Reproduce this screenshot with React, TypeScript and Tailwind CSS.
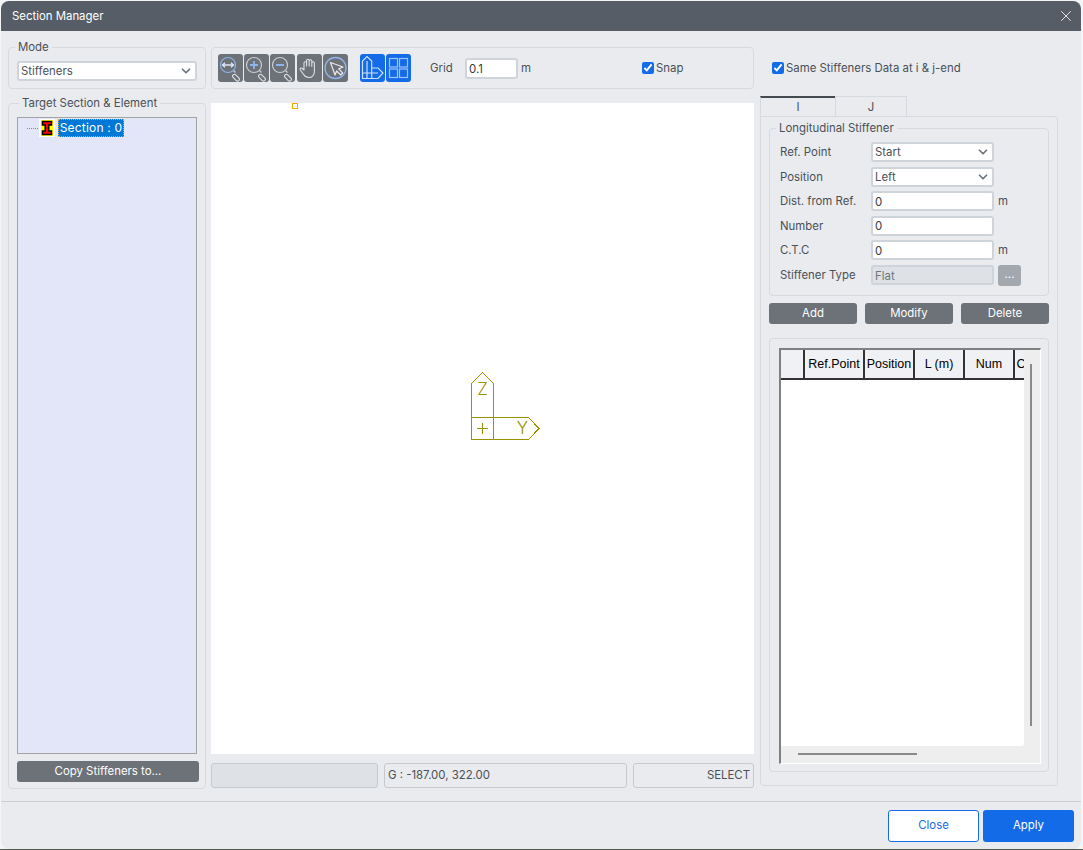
import { ChevronDown, X } from "lucide-react";
import type { ReactNode } from "react";

const FONT = "font-['Inter','Liberation_Sans',sans-serif]";
const TEXT = "text-[#495057]";
const OLIVE = "#9a9200";

const columns = [
  { label: "", width: "w-[24px]" },
  { label: "Ref.Point", width: "w-[60px]" },
  { label: "Position", width: "w-[50px]" },
  { label: "L (m)", width: "w-[50px]" },
  { label: "Num", width: "w-[50px]" },
  { label: "C.T.C", width: "w-[36px]" },
];

const Group = ({
  title,
  className,
  legendClass = "ml-[6px]",
  children,
}: {
  title: string;
  className: string;
  legendClass?: string;
  children: ReactNode;
}) => (
  <fieldset className={`border border-[#d6d9dd] rounded-[4px] ${className}`}>
    <legend className={`${legendClass} px-[3px] text-[11.4px] leading-[14px] ${TEXT}`}>{title}</legend>
    {children}
  </fieldset>
);

const Select = ({ value, className }: { value: string; className: string }) => (
  <div
    className={`h-[20px] flex items-center justify-between bg-white border-2 border-[#ced4da] rounded-[3px] pl-[2px] pr-[2px] text-[11.4px] text-[#495057] ${className}`}
  >
    <span className="pt-[2px]">{value}</span>
    <ChevronDown size={14} strokeWidth={3} color="#6c757d" />
  </div>
);

const Field = ({ value, disabled }: { value: string; disabled?: boolean }) => (
  <input
    readOnly
    value={value}
    className={`w-[123px] h-[20px] border-2 border-[#ced4da] rounded-[3px] pl-[2px] pt-px text-[11.4px] outline-none ${
      disabled ? "bg-[#dee2e6] text-[#6c757d]" : "bg-white text-[#343a40]"
    }`}
  />
);

const ToolButton = ({ children, blue }: { children: ReactNode; blue?: boolean }) => (
  <button
    className={`w-[25px] h-[28px] rounded-[3px] flex items-center justify-center ${
      blue ? "bg-[#146be8]" : "bg-[#6c7278]"
    }`}
  >
    <svg width="25" height="28" viewBox="0 0 25 28" fill="none">
      {children}
    </svg>
  </button>
);

const Lens = ({ blue, children }: { blue?: boolean; children?: ReactNode }) => (
  <>
    <circle cx="10" cy="11" r="7.5" stroke={blue ? "#8fb4ec" : "#c9ccd0"} strokeWidth="1.2" />
    <path d="M15.5 16.5l2 2" stroke="#c9ccd0" strokeWidth="1.2" />
    <rect
      x="16.4"
      y="19.6"
      width="8"
      height="3.6"
      rx="1.8"
      transform="rotate(45 16.4 19.6)"
      stroke="#dfe1e4"
      strokeWidth="1.1"
    />
    {children}
  </>
);

const Toolbar = () => (
  <div className="flex items-center">
    <div className="flex gap-px">
      <ToolButton>
        <Lens blue>
          <path
            d="M4.5 11h11M7 8.8L4.5 11 7 13.2M13 8.8l2.500 2.200-2.500 2.200"
            stroke="#dfe7f5"
            strokeWidth="1.300"
          />
        </Lens>
      </ToolButton>
      <ToolButton>
        <Lens>
          <path d="M6 11h8M10 7v8" stroke="#8fb4ec" strokeWidth="1.800" />
        </Lens>
      </ToolButton>
      <ToolButton>
        <Lens>
          <path d="M6 11h8" stroke="#8fb4ec" strokeWidth="1.800" />
        </Lens>
      </ToolButton>
    </div>
    <div className="flex gap-px ml-[2px]">
      <ToolButton>
        <path
          d="M7 16V9a1.300 1.300 0 0 1 2.600 0v3V6.500a1.300 1.300 0 0 1 2.600 0V12 7a1.300 1.300 0 0 1 2.600 0v5.500V9a1.300 1.300 0 0 1 2.600 0v8.500c0 3.500-2.500 6-5.500 6-2.700 0-4-1-5.300-3L3.300 16c-.9-1.500 1-2.700 2.100-1.500z"
          stroke="#dfe1e4"
          strokeWidth="1.100"
          strokeLinejoin="round"
        />
      </ToolButton>
      <ToolButton>
        <circle cx="12.500" cy="14" r="10.500" stroke="#8fb4ec" strokeWidth="1.300" />
        <path
          d="M7.500 8.500L20 13l-4.300 1.900 4 4.100-2 2-4.100-4L12 21z"
          stroke="#e8eaec"
          strokeWidth="1.200"
          strokeLinejoin="round"
        />
      </ToolButton>
    </div>
    <div className="flex gap-px ml-[12px]">
      <ToolButton blue>
        <path
          d="M2.500 24.500V7L7 2.500 11.700 7v7H18l5 5-5 5.500zM2.500 19h15.500M7 7v17.500M11.700 14v10.500"
          stroke="#cfe0fb"
          strokeWidth="1.200"
        />
      </ToolButton>
      <ToolButton blue>
        <g stroke="#9fc2f7" strokeWidth="1.200">
          <rect x="3.500" y="4.500" width="8" height="8.500" />
          <rect x="13.500" y="4.500" width="8" height="8.500" />
          <rect x="3.500" y="15" width="8" height="8.500" />
          <rect x="13.500" y="15" width="8" height="8.500" />
        </g>
      </ToolButton>
    </div>
  </div>
);

const SectionIcon = () => (
  <svg width="16" height="18" viewBox="0 0 16 18" className="mx-[1px]">
    <rect width="16" height="18" fill="#fff" />
    <rect x="2" y="1" width="12" height="16" fill="#ffff00" />
    <path
      d="M3.500 2.500h9v3.500h-2.700v6h2.700v3.500h-9V12h2.700V6H3.500z"
      fill="#ff0000"
      stroke="#000"
      strokeWidth="1.500"
    />
  </svg>
);

const Axis = () => (
  <div className="absolute left-[260px] top-[269px] w-[70px] h-[70px]">
    <svg width="70" height="70" viewBox="0 0 70 70" fill="none" shapeRendering="crispEdges">
      <path
        d="M.5 67.500V11.500L11.500 .5 22.500 11.500V45.500H57.500L68 56.500 57.500 67.500zM.5 45.500H22.500V67.500"
        stroke={OLIVE}
      />
      <path d="M6 56.500h11M11.500 51v11" stroke={OLIVE} />
    </svg>
    <span className="absolute left-[5px] top-[8px] w-[13px] text-center text-[17px] leading-[18px] font-light text-[#9a9200]">
      Z
    </span>
    <span className="absolute left-[45px] top-[47px] w-[13px] text-center text-[17px] leading-[18px] font-light text-[#9a9200]">
      Y
    </span>
  </div>
);

const LeftColumn = () => (
  <div className="w-[198px] pt-[9px]">
    <Group title="Mode" className="h-[49px]">
      <Select value="Stiffeners" className="mt-[7px] ml-[8px] w-[180px]" />
    </Group>
    <Group title="Target Section & Element" legendClass="ml-[10px]" className="h-[693px] mt-[7px]">
      <div className="mt-[7px] ml-[8px] h-[637px] w-[180px] bg-[#e3e5f8] border border-[#a3a3a3]">
        <div className="flex items-center pt-px pl-[9px]">
          <span className="w-[11px] border-t border-dotted border-[#8a8a8a]" />
          <SectionIcon />
          <span className="ml-[2px] w-[66px] h-[18px] flex items-center justify-center whitespace-nowrap bg-[#0078d7] border border-dotted border-[#e8a33d] text-white text-[12px] tracking-[0.2px]">
            Section : 0
          </span>
        </div>
      </div>
      <button className="mt-[7px] ml-[8px] w-[182px] h-[21px] rounded-[3px] bg-[#6c7278] text-white text-[11.4px]">
        Copy Stiffeners to...
      </button>
    </Group>
  </div>
);

const CenterColumn = () => (
  <div className="w-[543px] pt-[16px]">
    <div className={`h-[42px] flex items-center pl-[6px] border border-[#d6d9dd] rounded-[4px] text-[11.4px] ${TEXT}`}>
      <Toolbar />
      <span className="ml-[19px] w-[35px] pt-[2px]">Grid</span>
      <input
        readOnly
        value="0.1"
        className="w-[53px] h-[21px] bg-white border-2 border-[#ced4da] rounded-[3px] pl-[2px] pt-px text-[11.4px] text-[#343a40] outline-none"
      />
      <span className="ml-[3px] w-[12px] pt-[2px]">m</span>
      <label className="ml-[109px] flex items-center gap-[2px]">
        <input type="checkbox" readOnly checked className="w-[12px] h-[12px] accent-[#146be8]" />
        <span className="pt-[2px]">Snap</span>
      </label>
    </div>
    <div className="relative mt-[14px] h-[651px] bg-white">
      <span className="absolute left-[81px] top-0 w-[6px] h-[6px] border border-[#f5a800]" />
      <Axis />
    </div>
    <div className={`mt-[9px] h-[25px] flex gap-[6px] text-[11.4px] ${TEXT}`}>
      <div className="w-[167px] bg-[#dee2e6] border border-[#c6cacf] rounded-[3px]" />
      <div className="w-[243px] flex items-center pl-[3px] border border-[#c6cacf] rounded-[3px]">
        G : -187.00, 322.00
      </div>
      <div className="w-[121px] flex items-center justify-end pr-[3px] border border-[#c6cacf] rounded-[3px]">
        SELECT
      </div>
    </div>
  </div>
);

const RightColumn = () => (
  <div className={`w-[298px] text-[11.4px] ${TEXT}`}>
    <label className="h-[65px] pt-[9px] pl-[12px] flex items-center gap-[2px]">
      <input type="checkbox" readOnly checked className="w-[12px] h-[12px] accent-[#146be8]" />
      <span className="pt-[2px]">Same Stiffeners Data at i &amp; j-end</span>
    </label>
    <div className="flex h-[20px]">
      <div className="w-[75px] flex items-center justify-center pt-[2px] border-t-2 border-[#444a50] border-l border-l-[#d6d9dd]">
        I
      </div>
      <div className="w-[72px] flex items-center justify-center pt-[3px] border-t border-x border-[#d6d9dd]">
        J
      </div>
    </div>
    <div className="h-[670px] border border-[#d6d9dd] rounded-b-[4px] rounded-tr-[4px] px-[8px] pt-[4px]">
      <Group title="Longitudinal Stiffener" className="h-[175px]">
        <div className="mt-[7px] pl-[10px] grid grid-cols-[91px_123px_auto] items-center gap-y-[4.500px] [&>span]:pt-[2px]">
          <span>Ref. Point</span>
          <Select value="Start" className="w-[123px]" />
          <span />
          <span>Position</span>
          <Select value="Left" className="w-[123px]" />
          <span />
          <span>Dist. from Ref.</span>
          <Field value="0" />
          <span className="ml-[4px]">m</span>
          <span>Number</span>
          <Field value="0" />
          <span />
          <span>C.T.C</span>
          <Field value="0" />
          <span className="ml-[4px]">m</span>
          <span>Stiffener Type</span>
          <Field value="Flat" disabled />
          <button className="ml-[4px] w-[23px] h-[21px] rounded-[3px] bg-[#a3a8ae] text-white text-[11.4px] leading-none">
            ...
          </button>
        </div>
      </Group>
      <div className="mt-[7px] flex gap-[8px]">
        {["Add", "Modify", "Delete"].map((name) => (
          <button key={name} className="flex-1 h-[21px] rounded-[3px] bg-[#6c7278] text-white text-[11.4px]">
            {name}
          </button>
        ))}
      </div>
      <div className="mt-[14px] h-[434px] w-[280px] border border-[#d6d9dd] rounded-[4px] pt-[9px] pl-[9px]">
        <div className="w-[262px] h-[416px] flex flex-col bg-[#eeeeee] border-l-2 border-t-2 border-[#808080] border-r border-b border-r-white border-b-white">
          <div className="flex h-[396px]">
            <div className="w-[243px] bg-white rounded-br-[3px] overflow-hidden">
              <div className="flex h-[30px] w-[320px] bg-[#f0f1f5] border-b-2 border-[#333] font-['Liberation_Sans',sans-serif] text-[12.5px] text-black">
                {columns.map((col) => (
                  <div
                    key={col.label}
                    className={`${col.width} shrink-0 flex items-center justify-center whitespace-nowrap border-r-2 border-[#333]`}
                  >
                    {col.label}
                  </div>
                ))}
              </div>
            </div>
            <div className="ml-[6px] mt-[14px] w-[2px] h-[362px] bg-[#8a8a8a]" />
          </div>
          <div className="ml-[17px] mt-[7px] w-[119px] h-[2px] bg-[#8a8a8a]" />
        </div>
      </div>
    </div>
  </div>
);

const App = () => {
  return (
    <div className={`w-[1083px] h-[850px] bg-[#f4f5f6] pl-px pt-px border-b border-[#555a55] ${FONT}`}>
      <div className="w-[1080px] h-[848px] bg-[#e9ebef] rounded-lg overflow-hidden flex flex-col">
        <div className="h-[30px] shrink-0 bg-[#565d66] flex items-center justify-between pl-[11px] pr-[6px] text-white text-[11.4px]">
          <span className="pt-[2px]">Section Manager</span>
          <X size={18} strokeWidth={1.1} />
        </div>
        <div className="h-[770px] flex pl-[7px]">
          <LeftColumn />
          <div className="w-[5px]" />
          <CenterColumn />
          <div className="w-[6px]" />
          <RightColumn />
        </div>
        <div className="flex-1 border-t border-[#c9ccd1] flex items-center justify-end gap-[4px] pr-[7px] pt-[1px] text-[11.4px]">
          <button className="w-[91px] h-[32px] bg-white border border-[#146be8] rounded-[3px] text-[#146be8]">
            Close
          </button>
          <button className="w-[91px] h-[32px] bg-[#146be8] rounded-[3px] text-white">Apply</button>
        </div>
      </div>
    </div>
  );
};

export default App;
